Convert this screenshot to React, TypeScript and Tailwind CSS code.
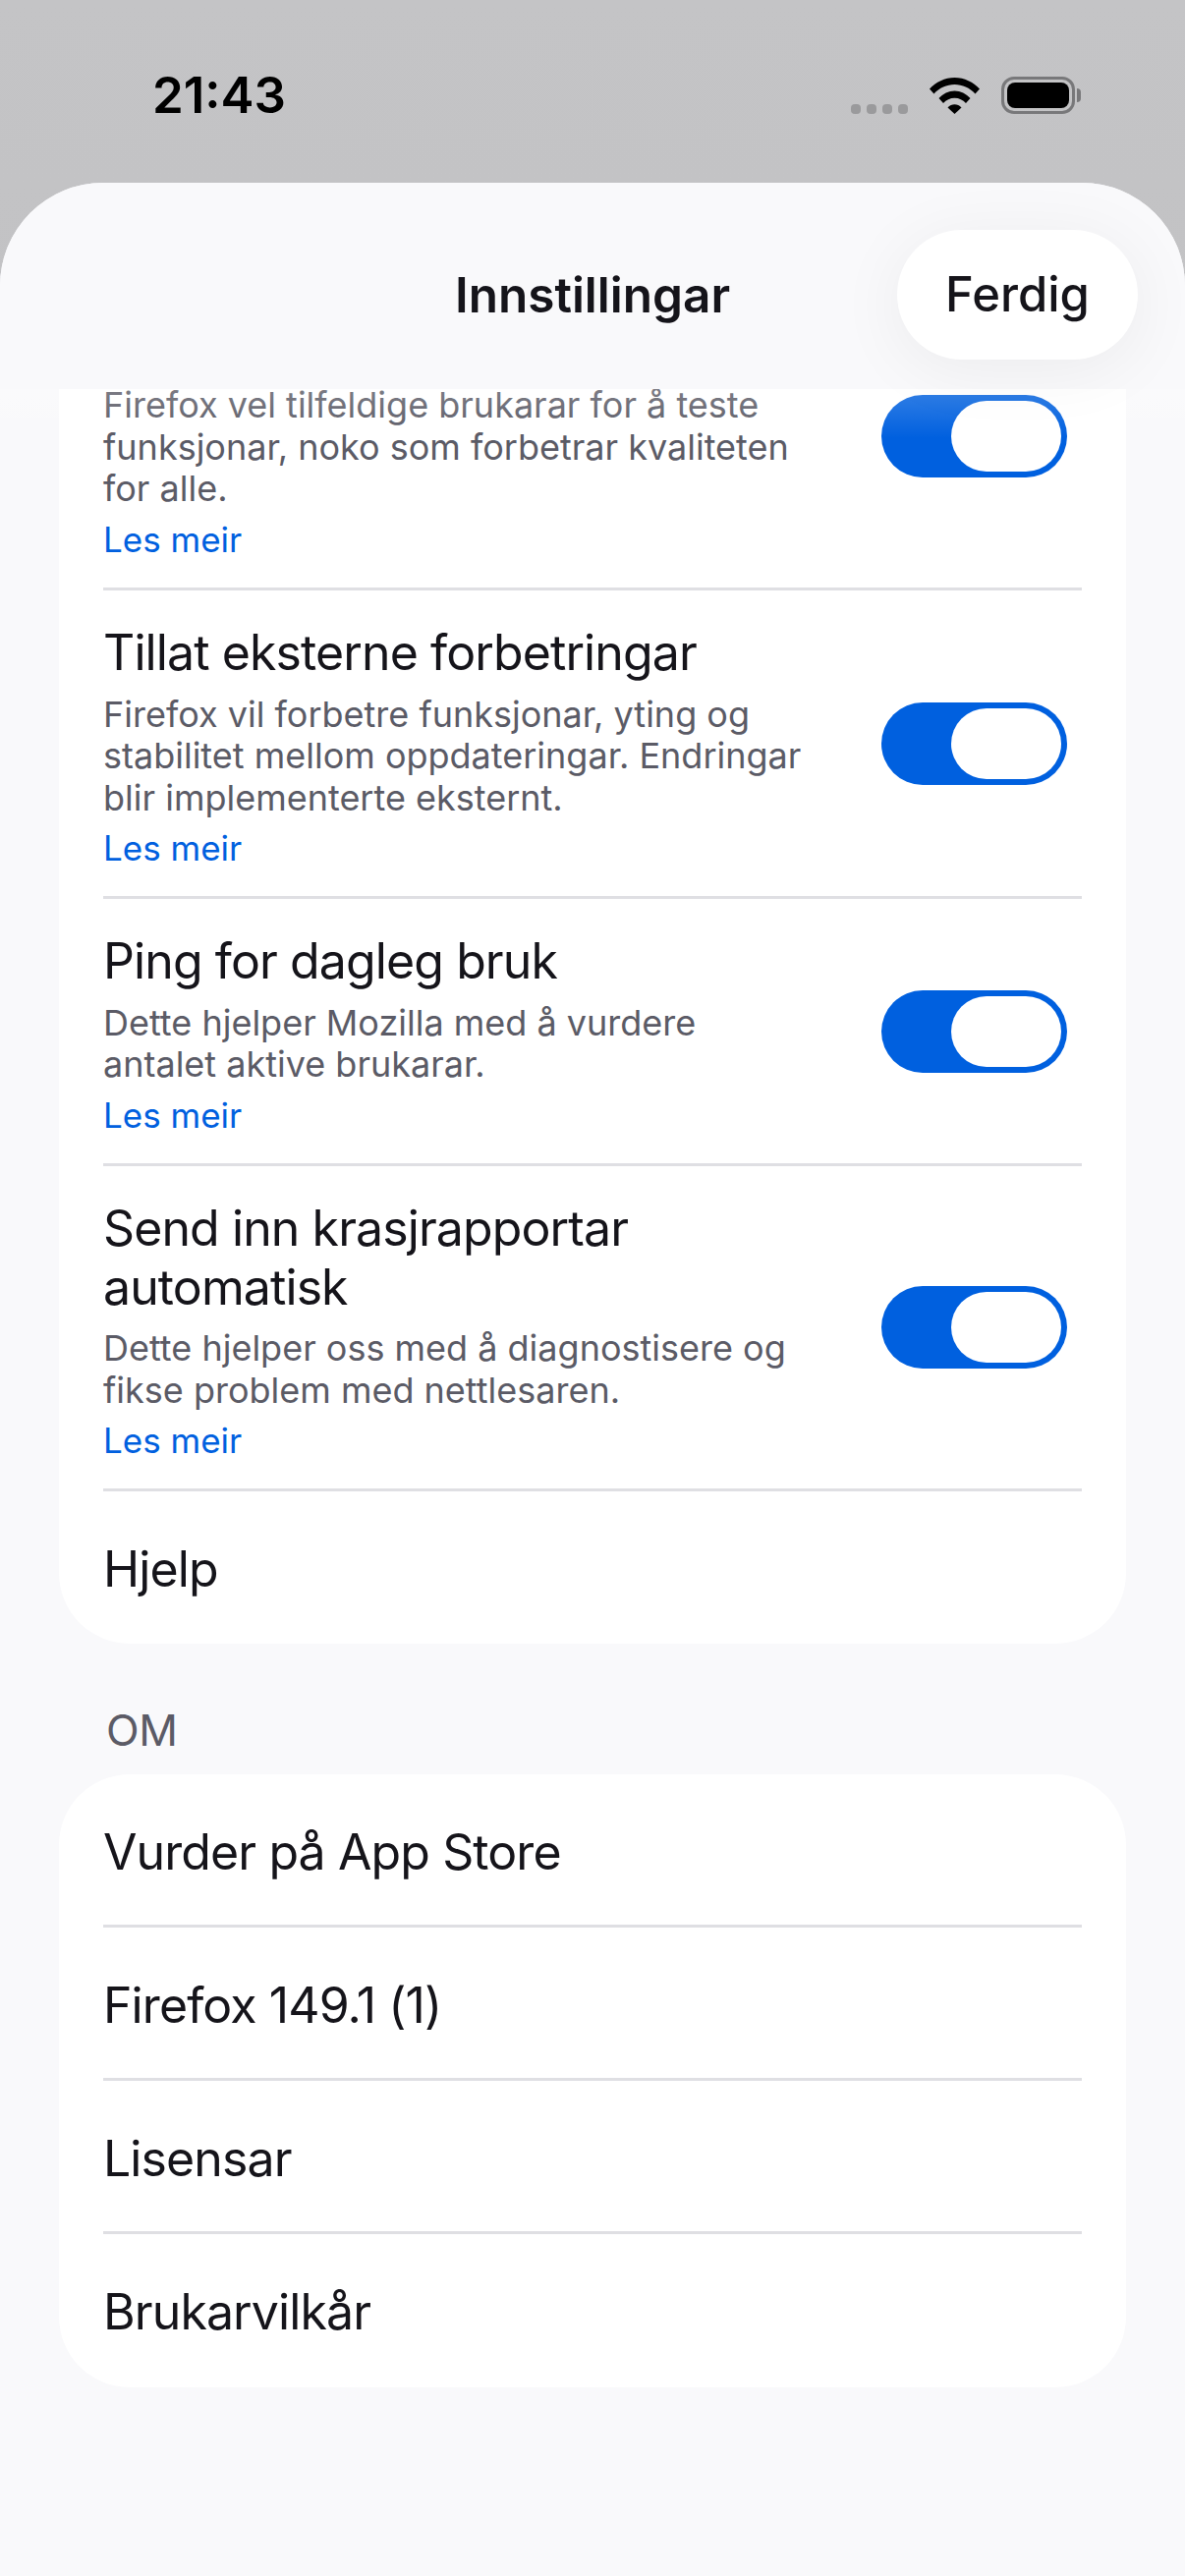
const INTER = "font-['Inter','Noto_Sans',sans-serif]";

const rows = [
  {
    desc: 'Firefox vel tilfeldige brukarar for å teste funksjonar, noko som forbetrar kvaliteten for alle.',
  },
  {
    title: 'Tillat eksterne forbetringar',
    desc: 'Firefox vil forbetre funksjonar, yting og stabilitet mellom oppdateringar. Endringar blir implementerte eksternt.',
  },
  {
    title: 'Ping for dagleg bruk',
    desc: 'Dette hjelper Mozilla med å vurdere antalet aktive brukarar.',
  },
  {
    title: 'Send inn krasjrapportar automatisk',
    desc: 'Dette hjelper oss med å diagnostisere og fikse problem med nettlesaren.',
  },
];

const aboutRows = ['Vurder på App Store', 'Firefox 149.1 (1)', 'Lisensar', 'Brukarvilkår'];

function Toggle() {
  return (
    <div className="mt-[1px] flex h-[84px] w-[189px] shrink-0 items-center justify-end rounded-full bg-[#0060df] pr-[6px]">
      <div className="h-[72px] w-[112px] rounded-full bg-white" />
    </div>
  );
}

function Separator() {
  return <div className="h-[3px] bg-[#dfdfe3]" />;
}

function ToggleRow({ title, desc, first }: { title?: string; desc: string; first?: boolean }) {
  return (
    <div className="flex items-center justify-between pr-[15px]">
      <div className={`w-[725px] ${first ? 'pb-[27.5px] pt-[103px]' : 'pb-[27px] pt-[33px]'}`}>
        {title && <div className="mb-[11.5px] text-[50px] leading-[60px] tracking-[-0.9px] text-[#15141a]">{title}</div>}
        <div className="text-[36px] leading-[42.5px] text-[#5b5b66]">{desc}</div>
        <div className="mt-[9px] text-[35px] leading-[43px] text-[#0060df]">Les meir</div>
      </div>
      <Toggle />
    </div>
  );
}

function Wifi() {
  return (
    <svg width="51" height="37" viewBox="0 0 51 37" fill="#000">
      <path d="M0 11.5C6.5 4.5 15.5 0 25.5 0S44.500 4.500 51 11.500L46.500 16.500C41 10.500 33.500 7 25.500 7S10 10.500 4.500 16.500Z" />
      <path d="M9.500 21C13.500 16.500 19.500 13.500 25.500 13.500S37.500 16.500 41.500 21L37 26C34 22.800 30 20.800 25.500 20.800S17 22.800 14 26Z" />
      <path d="M18.500 30.500C20.500 28.500 23 27.300 25.500 27.300S30.500 28.500 32.500 30.500L25.500 37Z" />
    </svg>
  );
}

function Battery() {
  return (
    <div className="flex items-center gap-[2px]">
      <div className="flex h-[38px] w-[75px] items-center justify-center rounded-[13px] border-[3px] border-[#78787a] p-[3px]">
        <div className="h-full w-full rounded-[8px] bg-black" />
      </div>
      <div className="h-[14px] w-[4px] rounded-r-full bg-[#78787a]" />
    </div>
  );
}

export default function App() {
  return (
    <div className={`${INTER} flex h-[2622px] w-[1206px] flex-col overflow-hidden bg-gradient-to-b from-[#c4c4c6] to-[#b6b6b8]`}>
      <div className="flex h-[186px] shrink-0 items-start justify-between pl-[155px] pr-[106px] pt-[67px]">
        <div className="text-[51px] font-semibold leading-[60px] text-black">21:43</div>
        <div className="flex items-end gap-[22px] pt-[11px]">
          <div className="flex gap-[6px]">
            {[0, 1, 2, 3].map((i) => (
              <div key={i} className="h-[10px] w-[10px] rounded-[4px] bg-[#9a9a9c]" />
            ))}
          </div>
          <Wifi />
          <Battery />
        </div>
      </div>

      <div className="flex flex-1 flex-col overflow-hidden rounded-t-[105px] bg-[#f9f9fb]">
        <header className="relative z-10 flex h-[210px] shrink-0 items-start justify-center bg-[#f9f9fb] pt-[48px]">
          <div className="flex h-[132px] items-center text-[49.5px] font-semibold text-[#15141a]">Innstillingar</div>
          <button className="absolute right-[48px] top-[48px] flex h-[132px] w-[245px] items-center justify-center rounded-full bg-white text-[49px] font-medium text-[#15141a] shadow-[0_10px_70px_rgba(0,0,0,0.06)]">
            Ferdig
          </button>
        </header>

        <main className="relative flex-1 overflow-hidden">
          <section className="mx-[60px] -mt-[108px] rounded-[72px] bg-white px-[45px]">
            {rows.map((row, i) => (
              <div key={i}>
                <ToggleRow title={row.title} desc={row.desc} first={i === 0} />
                <Separator />
              </div>
            ))}
            <div className="flex h-[155px] items-center pt-[3px] text-[50px] tracking-[-0.9px] text-[#15141a]">Hjelp</div>
          </section>

          <div className="mx-[108px] mb-[20px] mt-[63px] text-[44px] leading-[50px] tracking-[-0.5px] text-[#5b5b66]">OM</div>

          <section className="mx-[60px] rounded-[72px] bg-white px-[45px] pb-[3px]">
            {aboutRows.map((label, i) => (
              <div key={label}>
                {i > 0 && <Separator />}
                <div className="flex h-[153px] items-center pt-[5px] text-[50px] tracking-[-0.9px] text-[#15141a]">{label}</div>
              </div>
            ))}
          </section>
          {/* light veil where the list slides under the header */}
          <div className="absolute inset-x-0 top-0 h-[50px] bg-gradient-to-b from-white/20 to-transparent" />
        </main>
      </div>
    </div>
  );
}
